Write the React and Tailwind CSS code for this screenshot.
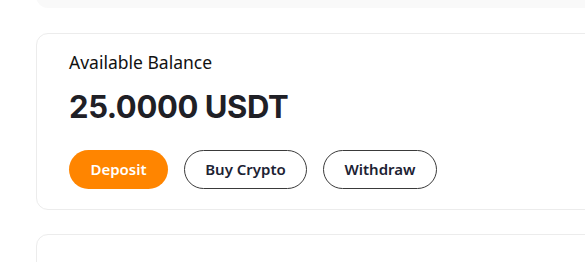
export default function App() {
  return (
    <div className="min-h-screen bg-white pl-9 overflow-hidden" style={{ fontFamily: '"Noto Sans", sans-serif' }}>
      <div className="flex flex-col w-[600px]">
        <div className="-mt-[52px] h-[60px] rounded-[12px] bg-[#f9f9f9]" />

        <div className="mt-[25px] rounded-[12px] border border-[#ececec] bg-white px-8 pt-[15px] pb-[20px]">
          <p className="text-[17.5px] leading-[26px] text-[#111]">Available Balance</p>
          <p
            className="mt-[12px] text-[31px] leading-[40px] font-bold tracking-[-0.4px] text-[#1f2026]"
            style={{ fontFamily: 'Inter, sans-serif' }}
          >
            25.0000 USDT
          </p>
          <div className="mt-[23px] flex gap-4">
            <button className="h-[39px] w-[99px] rounded-full bg-[#ff8500] text-[15px] font-semibold text-white">
              Deposit
            </button>
            <button className="h-[39px] w-[123px] rounded-full border border-[#3a3a3a] text-[15px] font-semibold text-[#1c2233]">
              Buy Crypto
            </button>
            <button className="h-[39px] w-[114px] rounded-full border border-[#3a3a3a] text-[15px] font-semibold text-[#1c2233]">
              Withdraw
            </button>
          </div>
        </div>

        <div className="mt-6 h-[80px] rounded-[12px] border border-[#ececec] bg-white" />
      </div>
    </div>
  );
}
